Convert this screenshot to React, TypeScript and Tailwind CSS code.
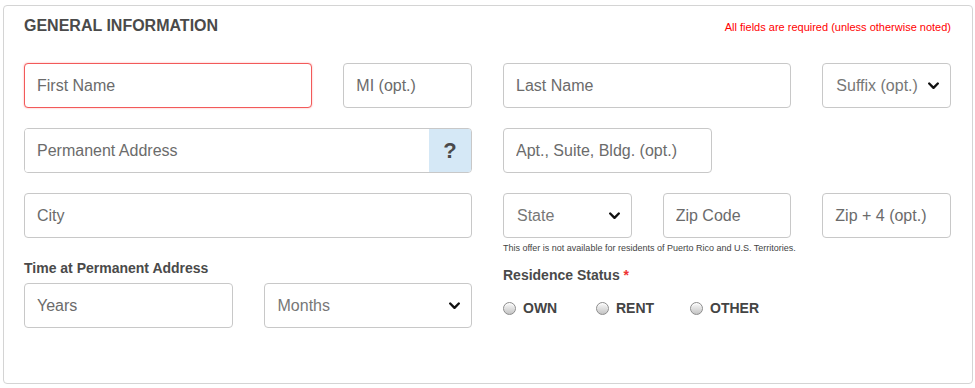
import React from "react";

const inputCls =
  "h-[45px] w-full rounded-[4px] border border-[#c8c8c8] bg-white px-[12px] text-[16px] text-[#666] placeholder:text-[#6b6b6b] outline-none";

function Input({ placeholder, className = "" }: { placeholder: string; className?: string }) {
  return <input placeholder={placeholder} className={`${inputCls} ${className}`} />;
}

function Chevron() {
  return (
    <svg width="11" height="8" viewBox="0 0 11 8" className="shrink-0">
      <path d="M1.2 1.5 L5.5 5.8 L9.8 1.5" fill="none" stroke="#111" strokeWidth="2.4" strokeLinecap="round" strokeLinejoin="round" />
    </svg>
  );
}

function Select({ label, className = "" }: { label: string; className?: string }) {
  return (
    <div
      className={`flex h-[45px] w-full items-center justify-between rounded-[4px] border border-[#c8c8c8] bg-white pl-[13px] pr-[11px] text-[16px] text-[#777] ${className}`}
    >
      <span>{label}</span>
      <Chevron />
    </div>
  );
}

function Radio({ label, className = "" }: { label: string; className?: string }) {
  return (
    <label className={`flex items-center gap-[7px] ${className}`}>
      <span className="h-[13px] w-[13px] rounded-full border border-[#8c8c8c] bg-gradient-to-b from-[#fafafa] to-[#c4c4c4] shadow-[inset_0_1px_1px_rgba(255,255,255,0.8)]" />
      <span className="text-[14px] font-bold leading-[16px] text-[#444]">{label}</span>
    </label>
  );
}

export default function App() {
  return (
    <div className="h-[388px] w-[975px] bg-white pl-[3px] pt-[5px] font-['Liberation_Sans',Arial,sans-serif]">
      <div className="h-[379px] w-[970px] rounded-[4px] border border-[#d4d4d4] pl-[20px] pr-[21px] pt-[11px]">
        <div className="flex items-baseline justify-between leading-[18px]">
          <h2 className="text-[16px] font-bold text-[#4a4a4a]">GENERAL INFORMATION</h2>
          <span className="text-[11px] text-[#f00]">All fields are required (unless otherwise noted)</span>
        </div>

        <div className="mt-[27px] grid grid-cols-12 gap-x-[31px] gap-y-[20px]">
          <Input
            placeholder="First Name"
            className="col-span-4 border-[#f25a5a] shadow-[0_0_2px_rgba(255,60,60,0.45)]"
          />
          <Input placeholder="MI (opt.)" className="col-span-2" />
          <Input placeholder="Last Name" className="col-span-4" />
          <Select label="Suffix (opt.)" className="col-span-2" />

          <div className="col-span-6 flex h-[45px] overflow-hidden rounded-[4px] border border-[#c8c8c8] bg-white">
            <input
              placeholder="Permanent Address"
              className="h-full flex-1 bg-white px-[12px] text-[16px] placeholder:text-[#6b6b6b] outline-none"
            />
            <div className="flex w-[42px] items-center justify-center bg-[#d5e8f6] text-[22px] font-bold text-[#4a4a4a]">
              ?
            </div>
          </div>
          <Input placeholder="Apt., Suite, Bldg. (opt.)" className="col-span-3" />
        </div>

        <div className="mt-[20px] grid grid-cols-2 gap-x-[31px]">
          <div>
            <Input placeholder="City" />
            <div className="mt-[22px] text-[14px] font-bold leading-[16px] text-[#4a4a4a]">
              Time at Permanent Address
            </div>
            <div className="mt-[7px] grid grid-cols-2 gap-x-[31px]">
              <Input placeholder="Years" />
              <Select label="Months" />
            </div>
          </div>
          <div>
            <div className="grid grid-cols-3 gap-x-[31px]">
              <Select label="State" />
              <Input placeholder="Zip Code" />
              <Input placeholder="Zip + 4 (opt.)" />
            </div>
            <div className="mt-[5px] text-[9px] leading-[11px] text-[#444]">
              This offer is not available for residents of Puerto Rico and U.S. Territories.
            </div>
            <div className="mt-[13px] text-[14px] font-bold leading-[16px] text-[#4a4a4a]">
              Residence Status <span className="text-[#e33]">*</span>
            </div>
            <div className="mt-[17px] flex items-center">
              <Radio label="OWN" className="w-[93px]" />
              <Radio label="RENT" className="w-[94px]" />
              <Radio label="OTHER" />
            </div>
          </div>
        </div>
      </div>
    </div>
  );
}
